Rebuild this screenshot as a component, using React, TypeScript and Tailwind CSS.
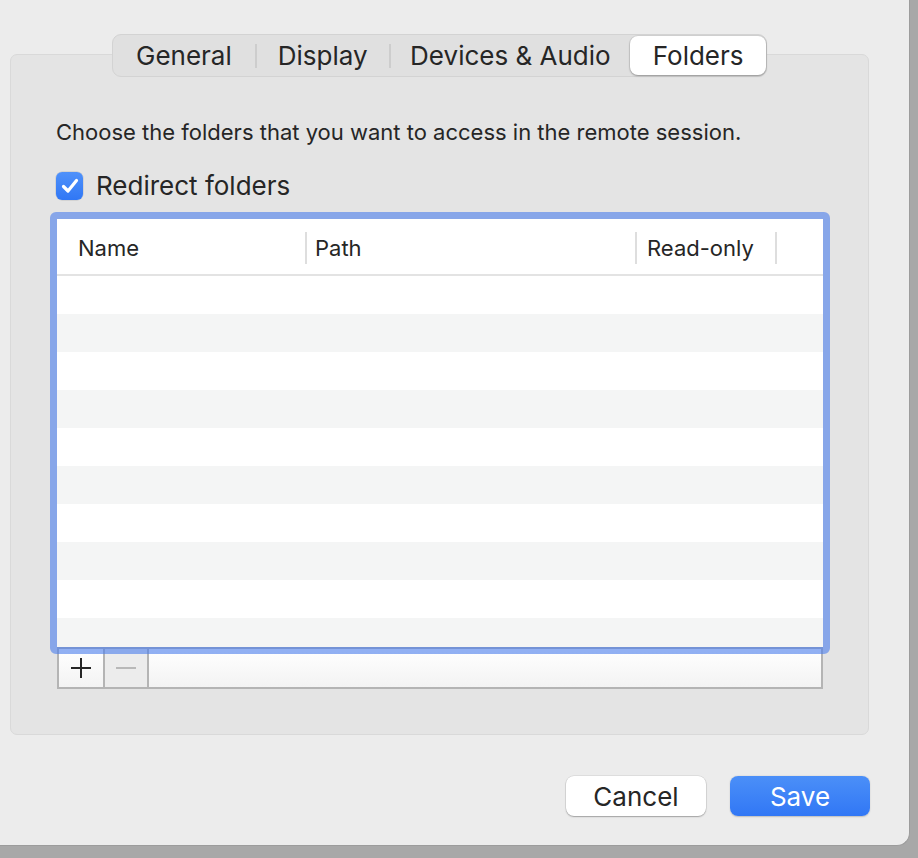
import React from "react";

const font = { fontFamily: "Inter, 'Noto Sans', 'Liberation Sans', sans-serif" };

const Tab = ({ label, width, active }: { label: string; width: string; active?: boolean }) => (
  <div
    className={`${width} flex h-full items-center justify-center text-[26px] text-[#262626] ${
      active ? "rounded-[8px] bg-white shadow-[0_0_0_1px_rgba(0,0,0,0.06),0_1px_2px_rgba(0,0,0,0.3)]" : ""
    }`}
  >
    {label}
  </div>
);

const Sep = () => <div className="h-[24px] w-[2px] bg-[#cdcdcd]" />;

const HeadSep = () => <div className="h-[32px] w-[2px] bg-[#dedede]" />;

const App = () => {
  const rows = Array.from({ length: 10 }, (_, i) => i);
  return (
    <div className="h-[858px] w-[918px] bg-[#a8a8a8]" style={font}>
      <div className="h-[846px] w-[910px] rounded-br-[13px] border-b border-r border-[#9c9c9c] bg-[#ececec] pl-[10px] pt-[34px]">
        <div className="w-[859px]">
          {/* tab selector */}
          <div className="relative z-10 flex justify-center">
            <div className="flex h-[43px] w-[655px] items-center rounded-[9px] border border-[#d3d3d3] bg-[#e0e0e0] py-[1px]">
              <Tab label="General" width="w-[142px]" />
              <Sep />
              <Tab label="Display" width="w-[132px]" />
              <Sep />
              <Tab label="Devices & Audio" width="w-[240px]" />
              <Tab label="Folders" width="w-[136px]" active />
            </div>
          </div>

          {/* group box */}
          <div className="-mt-[23px] h-[681px] rounded-[7px] border border-[#d9d9d9] bg-[#e4e4e4] pl-[45px] pt-[63px]">
            <p className="text-[22px] leading-[28px] text-[#262626]">
              Choose the folders that you want to access in the remote session.
            </p>

            <div className="mt-[26px] flex h-[28px] items-center gap-[13px]">
              <div className="flex h-[28px] w-[27px] items-center justify-center rounded-[6px] bg-gradient-to-b from-[#4f91fa] to-[#3077f5] shadow-[0_0_0_0.5px_rgba(0,0,0,0.15)]">
                <svg width="18" height="16" viewBox="0 0 18 16" fill="none">
                  <path d="M2.5 8.5 L7 13 L15.5 2.5" stroke="white" strokeWidth="3.2" strokeLinecap="round" strokeLinejoin="round" />
                </svg>
              </div>
              <span className="text-[26px] leading-[28px] text-[#262626]">Redirect folders</span>
            </div>

            <div className="ml-[1px] mt-[19px] w-[766px]">
              <div className="relative bg-white">
                <div className="pointer-events-none absolute -inset-[7px] z-10 rounded-[6px] border-[7px] border-[rgba(78,128,235,0.62)]" />
                <div className="flex h-[57px] items-center border-b-2 border-[#e3e3e3] pt-[3px] text-[22px] text-[#262626]">
                  <div className="w-[248px] pl-[21px]">Name</div>
                  <HeadSep />
                  <div className="w-[328px] pl-[8px]">Path</div>
                  <HeadSep />
                  <div className="w-[138px] pl-[10px]">Read-only</div>
                  <HeadSep />
                </div>
                <div className="h-[371px] overflow-hidden">
                  {rows.map((i) => (
                    <div key={i} className={`h-[38px] ${i % 2 === 0 ? "bg-white" : "bg-[#f4f5f5]"}`} />
                  ))}
                </div>
              </div>

              <div className="flex h-[42px] border-2 border-[#b4b4b4] bg-gradient-to-b from-white to-[#f3f3f3]">
                <div className="flex w-[46px] items-center justify-center border-r-2 border-[#b4b4b4]">
                  <svg width="22" height="22" viewBox="0 0 22 22">
                    <path d="M11 1 V21 M1 11 H21" stroke="#262626" strokeWidth="2" />
                  </svg>
                </div>
                <div className="flex w-[44px] items-center justify-center border-r-2 border-[#b4b4b4] bg-[#ececec]">
                  <svg width="22" height="22" viewBox="0 0 22 22">
                    <path d="M1 11 H21" stroke="#b8b8b8" strokeWidth="2" />
                  </svg>
                </div>
                <div className="flex-1" />
              </div>
            </div>
          </div>

          {/* footer buttons */}
          <div className="-mr-[1px] mt-[41px] flex justify-end gap-[24px]">
            <button className="h-[40px] w-[140px] rounded-[8px] bg-white text-[26px] text-[#262626] shadow-[0_0_0_0.5px_rgba(0,0,0,0.12),0_1px_1.5px_rgba(0,0,0,0.28)]">
              Cancel
            </button>
            <button className="h-[40px] w-[140px] rounded-[8px] bg-gradient-to-b from-[#4b8ff8] to-[#3177f5] text-[26px] text-white shadow-[0_0.5px_1.5px_rgba(0,0,0,0.2)]">
              Save
            </button>
          </div>
        </div>
      </div>
    </div>
  );
};

export default App;
